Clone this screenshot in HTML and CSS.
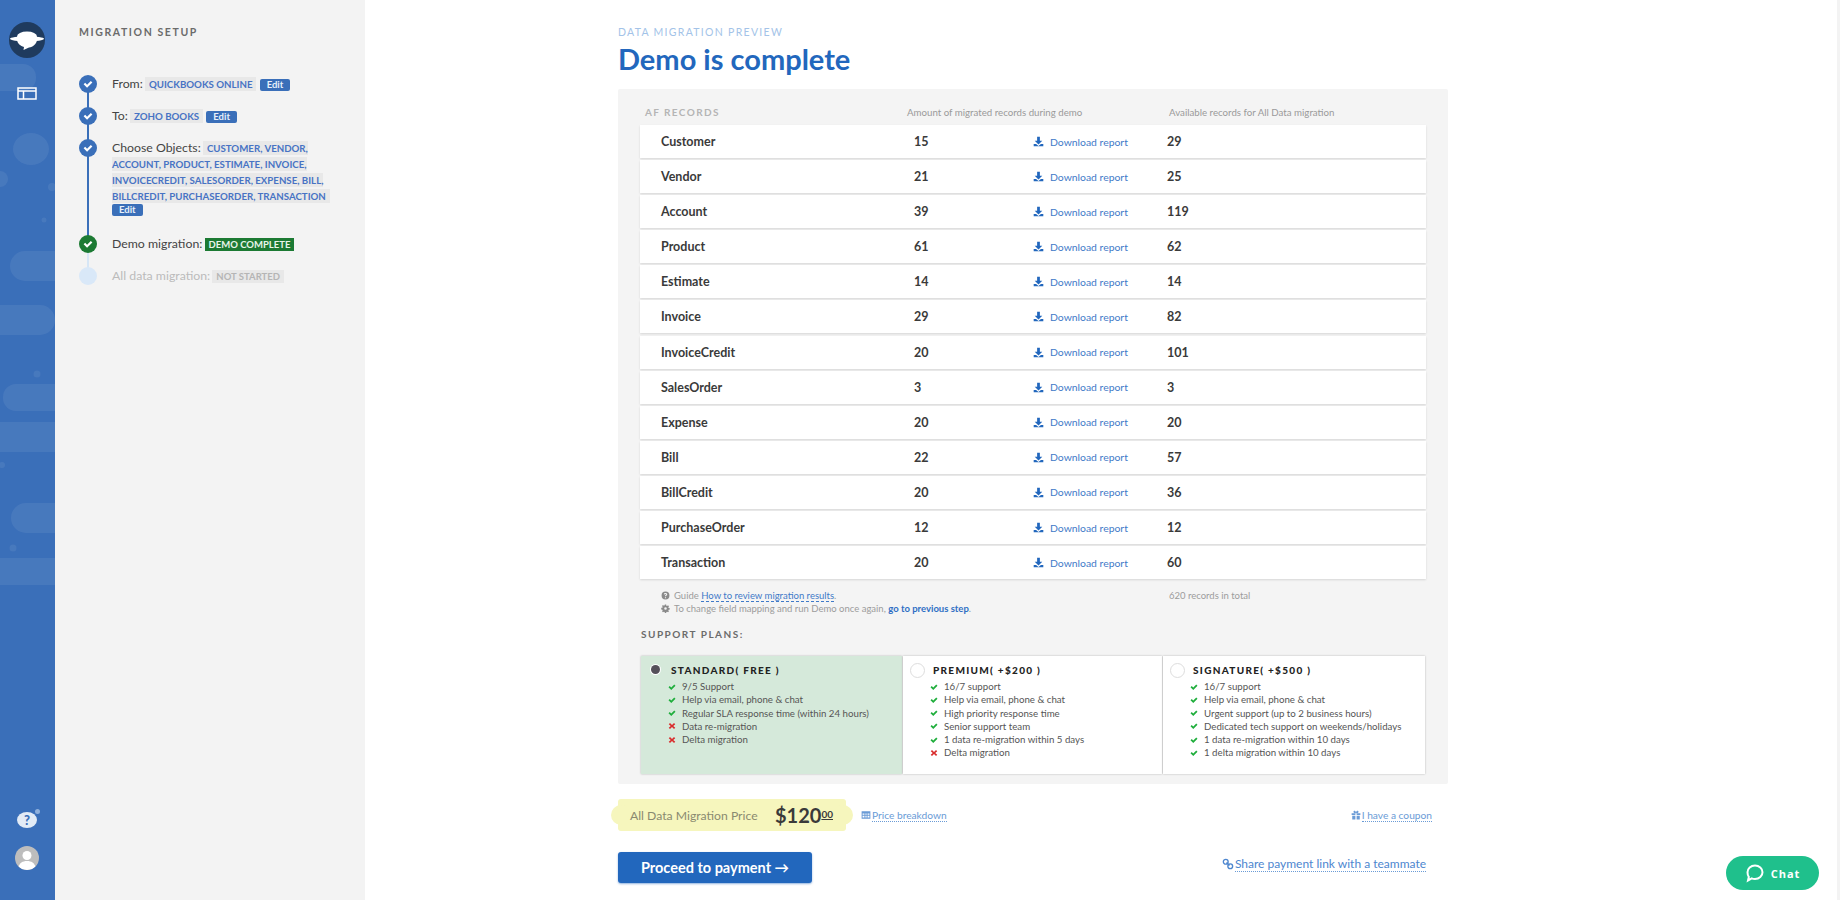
FILE: index.html
```html
<!DOCTYPE html>
<html lang="en">
<head>
    <meta charset="UTF-8">
    <title>Data migration preview</title>
    <link rel="stylesheet" href="styles.css">
</head>
<body>

    <svg class="icon-defs" width="0" height="0">
        <symbol id="i-download" viewBox="0 0 16 16"><path d="M6 1h4v6h3.500L8 12.200 2.500 7H6z"/><path d="M1 11.500h3.500L8 14.500l3.500-3H15V15H1z"/></symbol>
        <symbol id="i-check" viewBox="0 0 16 16"><path d="M1 8.500l2.500-2.500 3 3L12.500 3 15 5.500 6.500 14z"/></symbol>
        <symbol id="i-cross" viewBox="0 0 16 16"><path d="M4 2l4 3.800L12 2l2.500 2.500-4 3.500 4 3.500L12 14 8 10.200 4 14l-2.500-2.500 4-3.500-4-3.500z"/></symbol>
        <symbol id="i-question" viewBox="0 0 16 16"><path fill-rule="evenodd" d="M8 1a7 7 0 1 1 0 14A7 7 0 0 1 8 1zM7 11v2h2v-2zM8 3.500c-1.600 0-2.800.8-3 2.300l1.800.3c.1-.6.500-.9 1.100-.9s1 .3 1 .8c0 .4-.3.7-.8 1.100C7.400 7.600 7 8.200 7 9.500h2c0-.7.200-.9.800-1.400.7-.5 1.200-1.100 1.200-2.100 0-1.500-1.300-2.500-3-2.500z"/></symbol>
        <symbol id="i-cog" viewBox="0 0 16 16"><path fill-rule="evenodd" d="M6.800 1h2.400l.3 2 1.300.6 1.700-1.200 1.700 1.700-1.200 1.700.6 1.300 2 .3v2.400l-2 .3-.6 1.300 1.200 1.700-1.700 1.700-1.700-1.200-1.300.6-.3 2H6.800l-.3-2-1.300-.6-1.700 1.200-1.700-1.700 1.200-1.700-.6-1.300-2-.3V6.800l2-.3.6-1.300L1.800 3.500l1.700-1.700 1.700 1.200 1.300-.6zM8 5.700a2.300 2.300 0 1 0 0 4.600 2.300 2.300 0 0 0 0-4.600z"/></symbol>
        <symbol id="i-table" viewBox="0 0 16 16"><path fill-rule="evenodd" d="M1 2h14v12H1zM2.500 5.500V7.500h3V5.500zm4.500 0V7.500h2V5.500zm3.500 0V7.500h3V5.500zM2.500 9v3h3V9zM7 9v3h2V9zm3.500 0v3h3V9z"/></symbol>
        <symbol id="i-gift" viewBox="0 0 16 16"><path d="M1 5h6v3H1zm8 0h6v3H9zM2 9h5v6H2zm7 0h5v6H9z"/><path d="M8 5C6 5 4 4.500 4 3s1.500-2 2.500-1.500C7.500 2 8 3.500 8 5c0-1.500.5-3 1.500-3.500S12 1.500 12 3 10 5 8 5z"/></symbol>
        <symbol id="i-link" viewBox="0 0 16 16"><g fill="none" stroke="currentColor" stroke-width="1.800"><circle cx="5" cy="5" r="3.200"/><circle cx="11" cy="11" r="3.200"/><path d="M6 6l4 4"/></g></symbol>
    </svg>

    <!-- Rail -->
    <aside class="rail">
        <svg class="rail-blobs" width="55" height="900" viewBox="0 0 55 900">
            <rect x="-20" y="64" width="56" height="27" rx="13"/>
            <ellipse cx="31" cy="149" rx="18" ry="16"/>
            <circle cx="0" cy="179" r="8"/>
            <circle cx="52" cy="187" r="4"/>
            <circle cx="44" cy="220" r="2.500"/>
            <rect x="10" y="251" width="70" height="30" rx="15"/>
            <rect x="-30" y="305" width="85" height="30" rx="15"/>
            <circle cx="37" cy="374" r="3.500"/>
            <rect x="3" y="384" width="80" height="27" rx="13"/>
            <rect x="-20" y="422" width="90" height="30" rx="0"/>
            <circle cx="2" cy="465" r="3"/>
            <rect x="11" y="503" width="70" height="30" rx="15"/>
            <circle cx="13" cy="548" r="3.500"/>
            <rect x="-20" y="558" width="90" height="27"/>
        </svg>

        <div class="logo">
            <svg width="36" height="36" viewBox="0 0 36 36">
                <circle cx="18" cy="18" r="18" fill="#1f3b5e"/>
                <ellipse cx="18" cy="14.500" rx="10" ry="5" fill="#fff"/>
                <path d="M8 18h20c-.5 4-4 7-8 7.500L14.500 28l.5-3c-3.500-1-6.500-3.500-7-7z" fill="#fff"/>
                <ellipse cx="18" cy="16.800" rx="17" ry="2.600" fill="#fff"/>
            </svg>
        </div>
        <svg class="rail-nav" width="20" height="13" viewBox="0 0 20 13">
            <path d="M1 1h18v11H1zM1 4h18M6.500 4v8" fill="none" stroke="#fff" stroke-width="1.500"/>
        </svg>

        <div class="rail-bottom">
            <div class="help">?<span class="help-dot"></span></div>
            <div class="avatar">
                <svg width="24" height="24" viewBox="0 0 24 24">
                    <circle cx="12" cy="9.500" r="4.500" fill="#fff"/>
                    <path d="M3.500 21c1-4 4-6 8.500-6s7.500 2 8.500 6c-2 2-5 3-8.500 3s-6.500-1-8.500-3z" fill="#fff"/>
                </svg>
            </div>
        </div>
    </aside>

    <!-- Sidebar -->
    <aside class="sidebar">
        <h4 class="sidebar-title">MIGRATION SETUP</h4>
        <ul class="steps">
            <li class="step done">
                <span class="dot"><svg><use href="#i-check"/></svg></span>
                From: <span class="tag">QUICKBOOKS ONLINE</span> <a class="edit">Edit</a>
            </li>
            <li class="step done">
                <span class="dot"><svg><use href="#i-check"/></svg></span>
                To: <span class="tag">ZOHO BOOKS</span> <a class="edit">Edit</a>
            </li>
            <li class="step done tall">
                <span class="dot"><svg><use href="#i-check"/></svg></span>
                Choose Objects: <span class="tag">CUSTOMER, VENDOR, ACCOUNT, PRODUCT, ESTIMATE, INVOICE, INVOICECREDIT, SALESORDER, EXPENSE, BILL, BILLCREDIT, PURCHASEORDER, TRANSACTION</span> <a class="edit">Edit</a>
            </li>
            <li class="step green">
                <span class="dot"><svg><use href="#i-check"/></svg></span>
                Demo migration: <span class="tag tag-green">DEMO COMPLETE</span>
            </li>
            <li class="step off">
                <span class="dot"></span>
                All data migration: <span class="tag tag-grey">NOT STARTED</span>
            </li>
        </ul>
    </aside>

    <!-- Main -->
    <main class="main">
        <div class="content">
            <p class="eyebrow">DATA MIGRATION PREVIEW</p>
            <h1>Demo is complete</h1>

            <section class="panel">
                <div class="records-head">
                    <span class="head-title">AF RECORDS</span>
                    <span>Amount of migrated records during demo</span>
                    <span></span>
                    <span>Available records for All Data migration</span>
                </div>

                <div class="records">
                    <div class="record"><b>Customer</b><b>15</b><a class="report"><svg><use href="#i-download"/></svg>Download report</a><b>29</b></div>
                    <div class="record"><b>Vendor</b><b>21</b><a class="report"><svg><use href="#i-download"/></svg>Download report</a><b>25</b></div>
                    <div class="record"><b>Account</b><b>39</b><a class="report"><svg><use href="#i-download"/></svg>Download report</a><b>119</b></div>
                    <div class="record"><b>Product</b><b>61</b><a class="report"><svg><use href="#i-download"/></svg>Download report</a><b>62</b></div>
                    <div class="record"><b>Estimate</b><b>14</b><a class="report"><svg><use href="#i-download"/></svg>Download report</a><b>14</b></div>
                    <div class="record"><b>Invoice</b><b>29</b><a class="report"><svg><use href="#i-download"/></svg>Download report</a><b>82</b></div>
                    <div class="record"><b>InvoiceCredit</b><b>20</b><a class="report"><svg><use href="#i-download"/></svg>Download report</a><b>101</b></div>
                    <div class="record"><b>SalesOrder</b><b>3</b><a class="report"><svg><use href="#i-download"/></svg>Download report</a><b>3</b></div>
                    <div class="record"><b>Expense</b><b>20</b><a class="report"><svg><use href="#i-download"/></svg>Download report</a><b>20</b></div>
                    <div class="record"><b>Bill</b><b>22</b><a class="report"><svg><use href="#i-download"/></svg>Download report</a><b>57</b></div>
                    <div class="record"><b>BillCredit</b><b>20</b><a class="report"><svg><use href="#i-download"/></svg>Download report</a><b>36</b></div>
                    <div class="record"><b>PurchaseOrder</b><b>12</b><a class="report"><svg><use href="#i-download"/></svg>Download report</a><b>12</b></div>
                    <div class="record"><b>Transaction</b><b>20</b><a class="report"><svg><use href="#i-download"/></svg>Download report</a><b>60</b></div>
                </div>

                <div class="notes">
                    <div>
                        <p><svg><use href="#i-question"/></svg>Guide <a class="dashed">How to review migration results</a>.</p>
                        <p><svg><use href="#i-cog"/></svg>To change field mapping and run Demo once again, <a class="strong-link">go to previous step</a>.</p>
                    </div>
                    <p class="total">620 records in total</p>
                </div>

                <h4 class="plans-title">SUPPORT PLANS:</h4>
                <div class="plans">
                    <div class="plan selected">
                        <h5><span class="radio"></span>STANDARD( FREE )</h5>
                        <ul>
                            <li><svg class="yes"><use href="#i-check"/></svg>9/5 Support</li>
                            <li><svg class="yes"><use href="#i-check"/></svg>Help via email, phone &amp; chat</li>
                            <li><svg class="yes"><use href="#i-check"/></svg>Regular SLA response time (within 24 hours)</li>
                            <li><svg class="no"><use href="#i-cross"/></svg>Data re-migration</li>
                            <li><svg class="no"><use href="#i-cross"/></svg>Delta migration</li>
                        </ul>
                    </div>
                    <div class="plan">
                        <h5><span class="radio"></span>PREMIUM( +$200 )</h5>
                        <ul>
                            <li><svg class="yes"><use href="#i-check"/></svg>16/7 support</li>
                            <li><svg class="yes"><use href="#i-check"/></svg>Help via email, phone &amp; chat</li>
                            <li><svg class="yes"><use href="#i-check"/></svg>High priority response time</li>
                            <li><svg class="yes"><use href="#i-check"/></svg>Senior support team</li>
                            <li><svg class="yes"><use href="#i-check"/></svg>1 data re-migration within 5 days</li>
                            <li><svg class="no"><use href="#i-cross"/></svg>Delta migration</li>
                        </ul>
                    </div>
                    <div class="plan">
                        <h5><span class="radio"></span>SIGNATURE( +$500 )</h5>
                        <ul>
                            <li><svg class="yes"><use href="#i-check"/></svg>16/7 support</li>
                            <li><svg class="yes"><use href="#i-check"/></svg>Help via email, phone &amp; chat</li>
                            <li><svg class="yes"><use href="#i-check"/></svg>Urgent support (up to 2 business hours)</li>
                            <li><svg class="yes"><use href="#i-check"/></svg>Dedicated tech support on weekends/holidays</li>
                            <li><svg class="yes"><use href="#i-check"/></svg>1 data re-migration within 10 days</li>
                            <li><svg class="yes"><use href="#i-check"/></svg>1 delta migration within 10 days</li>
                        </ul>
                    </div>
                </div>
            </section>

            <div class="price-row">
                <div class="price">
                    <span class="price-label">All Data Migration Price</span>
                    <span class="price-value">$120<sup>00</sup></span>
                </div>
                <a class="soft-link breakdown"><svg><use href="#i-table"/></svg><span>Price breakdown</span></a>
                <a class="soft-link coupon"><svg><use href="#i-gift"/></svg><span>I have a coupon</span></a>
            </div>

            <div class="actions">
                <button class="pay-btn">Proceed to payment →</button>
                <a class="soft-link share"><svg><use href="#i-link"/></svg><span>Share payment link with a teammate</span></a>
            </div>
        </div>
    </main>

    <!-- Chat -->
    <button class="chat-btn">
        <svg width="20" height="20" viewBox="0 0 20 20"><path d="M10 2.500c4.200 0 7.500 3 7.500 6.800s-3.300 6.700-7.500 6.700c-1.200 0-2.300-.2-3.300-.7L3 17.500l.8-3.600C2.900 12.700 2.500 11 2.500 9.300 2.500 5.500 5.800 2.500 10 2.500z" fill="none" stroke="#fff" stroke-width="2"/></svg>
        Chat
    </button>

</body>
</html>
```

FILE: styles.css
```css
html, body {
    margin: 0;
    padding: 0;
    height: 100%;
    overflow: hidden;
}

body {
    display: flex;
    font-family: Lato, "Open Sans", sans-serif;
    color: #333;
    background: #fff;
}

.icon-defs {
    position: absolute;
}

p, h1, h4, h5, ul {
    margin: 0;
    padding: 0;
}

ul {
    list-style: none;
}

/* Rail */
.rail {
    position: relative;
    flex: 0 0 55px;
    box-sizing: border-box;
    height: 900px;
    padding-right: 1px;
    background-color: #3a6fb9;
    display: flex;
    flex-direction: column;
    align-items: center;
    overflow: hidden;
}

.rail-blobs {
    position: absolute;
    top: 0;
    left: 0;
    fill: rgba(255, 255, 255, 0.07);
}

.logo {
    position: relative;
    margin-top: 22px;
    height: 36px;
}

.rail-nav {
    position: relative;
    margin-top: 29px;
}

.rail-bottom {
    position: relative;
    margin-top: auto;
    padding-bottom: 30px;
    display: flex;
    flex-direction: column;
    align-items: center;
    gap: 18px;
}

.help {
    position: relative;
    width: 20px;
    height: 16px;
    border-radius: 50%;
    background-color: #e2ebf6;
    color: #3a6fb9;
    font-size: 13px;
    font-weight: 900;
    line-height: 16px;
    text-align: center;
}

.help-dot {
    position: absolute;
    top: -3px;
    right: -3px;
    width: 5px;
    height: 5px;
    border-radius: 50%;
    background-color: #8fb0dc;
}

.avatar {
    width: 24px;
    height: 24px;
    border-radius: 50%;
    background-color: #bdbdbd;
    overflow: hidden;
}

/* Sidebar */
.sidebar {
    flex: 0 0 310px;
    box-sizing: border-box;
    height: 900px;
    padding: 26px 0 0 24px;
    background-color: #f3f3f3;
}

.sidebar-title {
    font-size: 10.500px;
    font-weight: 700;
    letter-spacing: 1.600px;
    line-height: 13px;
    color: #6b6b6b;
}

.steps {
    margin-top: 37px;
}

.step {
    position: relative;
    box-sizing: border-box;
    width: 262px;
    height: 32px;
    padding-left: 33px;
    font-size: 12.300px;
    line-height: 16px;
    color: #444;
}

.step.tall {
    height: 96px;
}

.step::before {
    content: "";
    position: absolute;
    left: 8px;
    top: 8px;
    bottom: -8px;
    width: 2px;
    background-color: #3a6fb9;
}

.step.green::before {
    background-color: #d6e6f6;
}

.step.off::before {
    display: none;
}

.dot {
    position: absolute;
    left: 0;
    top: -1px;
    width: 18px;
    height: 18px;
    border-radius: 50%;
    background-color: #3a6fb9;
    display: flex;
    align-items: center;
    justify-content: center;
}

.dot svg {
    width: 10px;
    height: 10px;
    fill: #fff;
}

.step.green .dot {
    background-color: #1c7a33;
}

.step.off {
    color: #bbb;
}

.step.off .dot {
    background-color: #d9e8f8;
}

.tag {
    padding: 1px 4px;
    margin-left: -1px;
    font-size: 9.700px;
    font-weight: 700;
    line-height: 12px;
    color: #4773c4;
    background-color: #e8e8e8;
}

.tag-green {
    font-size: 9.500px;
    color: #e8f5ea;
    background-color: #1c7a33;
}

.tag-grey {
    font-size: 9.500px;
    color: #b5b5b5;
    background-color: #e8e8e8;
}

.edit {
    display: inline-block;
    padding: 0 7px;
    border-radius: 2px;
    font-size: 9.500px;
    font-weight: 700;
    line-height: 12px;
    color: #e8f0fa;
    background-color: #3a6fb9;
}

.step.tall .edit {
    display: table;
}

/* Main */
.main {
    flex: 1;
    border-right: 3px solid #f3f3f3;
    height: 900px;
}

.content {
    width: 830px;
    margin-left: 253px;
}

.eyebrow {
    padding-top: 26px;
    font-size: 10.500px;
    letter-spacing: 1.300px;
    line-height: 13px;
    color: #a3c3e8;
}

h1 {
    margin-top: 3px;
    font-size: 29px;
    font-weight: 700;
    line-height: 33px;
    color: #2267bd;
}

.panel {
    box-sizing: border-box;
    height: 695px;
    margin-top: 14px;
    padding: 0 22px;
    background-color: #f4f4f4;
    border-radius: 2px;
}

.records-head {
    box-sizing: border-box;
    display: grid;
    grid-template-columns: 262px 128px 134px 1fr;
    align-items: center;
    height: 36px;
    padding: 9px 0 0 5px;
    font-size: 9.700px;
    white-space: nowrap;
    color: #9a9a9a;
}

.head-title {
    font-size: 10px;
    font-weight: 700;
    letter-spacing: 1.400px;
    color: #b5b5b5;
}

.records {
    display: flex;
    flex-direction: column;
    gap: 2.100px;
}

.record {
    display: grid;
    grid-template-columns: 253px 119px 134px 1fr;
    align-items: center;
    height: 33px;
    padding-left: 21px;
    background-color: #fff;
    box-shadow: 0 1px 2px rgba(0, 0, 0, 0.12);
    font-size: 12.500px;
    color: #3a3a3a;
}

.report {
    display: flex;
    align-items: center;
    font-size: 10.400px;
    color: #3f7ac8;
}

.report svg {
    width: 11px;
    height: 11px;
    margin-right: 6px;
    fill: #2267bd;
}

.notes {
    display: grid;
    grid-template-columns: 508px 1fr;
    padding: 10px 0 0 21px;
    font-size: 9.500px;
    line-height: 13px;
    color: #9c9c9c;
}

.notes svg {
    width: 9px;
    height: 9px;
    margin-right: 4px;
    fill: #8a8a8a;
    vertical-align: -1px;
}

.dashed {
    color: #3f7ac8;
    border-bottom: 1px dashed #3f7ac8;
}

.strong-link {
    color: #2e6fc4;
    font-weight: 700;
}

.plans-title {
    margin-top: 13px;
    padding-left: 1px;
    font-size: 10px;
    font-weight: 700;
    letter-spacing: 1.500px;
    line-height: 13px;
    color: #6b6b6b;
}

.plans {
    display: grid;
    grid-template-columns: 261px 259px 262px;
    gap: 1px;
    width: 784px;
    margin: 15px 0 0 1px;
}

.plan {
    box-sizing: border-box;
    height: 118px;
    padding: 8px 0 0 30px;
    background-color: #fff;
    box-shadow: 0 0 2px rgba(0, 0, 0, 0.25);
}

.plan.selected {
    background-color: #d5e9da;
}

.plan h5 {
    position: relative;
    font-size: 10px;
    font-weight: 900;
    letter-spacing: 1.300px;
    line-height: 13px;
    color: #222;
}

.radio {
    position: absolute;
    left: -23px;
    top: -1px;
    width: 13px;
    height: 13px;
    border-radius: 50%;
    border: 1px solid #ddd;
    background-color: #fff;
}

.plan.selected .radio {
    left: -20px;
    top: 1px;
    width: 9px;
    height: 9px;
    border: 0;
    background-color: #55505a;
    box-shadow: 0 0 0 1px #fff;
}

.plan ul {
    margin: 3px 0 0 -3px;
}

.plan li {
    display: flex;
    align-items: center;
    font-size: 9.700px;
    line-height: 13.200px;
    color: #555;
}

.plan li svg {
    flex: none;
    width: 8px;
    height: 8px;
    margin-right: 6px;
}

.yes {
    fill: #1fae3c;
}

.no {
    fill: #d92c2c;
}

/* Price */
.price-row {
    position: relative;
    display: flex;
    align-items: center;
    height: 32px;
    margin-top: 15px;
}

.price {
    position: relative;
    box-sizing: border-box;
    display: flex;
    align-items: center;
    justify-content: space-between;
    width: 228px;
    height: 32px;
    padding: 0 13px 0 12px;
    background-color: #f6f6bd;
    border-radius: 3px;
}

.price::before,
.price::after {
    content: "";
    position: absolute;
    top: 6px;
    width: 20px;
    height: 20px;
    border-radius: 50%;
    background-color: #f6f6bd;
}

.price::before {
    left: -7px;
}

.price::after {
    right: -7px;
}

.price-label {
    position: relative;
    z-index: 1;
    font-size: 12.200px;
    color: #8a8a70;
}

.price-value {
    position: relative;
    z-index: 1;
    font-size: 20px;
    font-weight: 700;
    color: #3a3a3a;
}

.price-value sup {
    font-size: 10px;
    text-decoration: underline;
    vertical-align: 5px;
    line-height: 0;
}

.soft-link {
    display: inline-flex;
    align-items: center;
    font-size: 10.200px;
    color: #6a9bd6;
}

.soft-link svg {
    width: 10px;
    height: 10px;
    margin-right: 1px;
    fill: #6a9bd6;
}

.soft-link span {
    border-bottom: 1px dotted #6a9bd6;
}

.breakdown {
    margin-left: 15px;
}

.coupon {
    margin-left: auto;
    margin-right: 16px;
}

.actions {
    display: flex;
    align-items: center;
    justify-content: space-between;
    margin-top: 21px;
    padding-right: 22px;
}

.pay-btn {
    width: 194px;
    height: 31px;
    border: none;
    border-radius: 3px;
    background-color: #2267bd;
    box-shadow: 0 1px 2px rgba(34, 103, 189, 0.5);
    color: #fff;
    font-family: inherit;
    font-size: 14.500px;
    font-weight: 700;
}

.share {
    margin-bottom: 8px;
    font-size: 12px;
    color: #4d86cf;
}

.share svg {
    width: 12px;
    height: 12px;
    color: #4d86cf;
}

.chat-btn {
    position: fixed;
    left: 1726px;
    top: 856px;
    display: flex;
    align-items: center;
    justify-content: center;
    gap: 6px;
    width: 93px;
    height: 34px;
    border: none;
    border-radius: 17px;
    background-color: #1fc08c;
    color: #fff;
    font-family: "Open Sans", sans-serif;
    font-size: 11px;
    font-weight: 700;
    letter-spacing: 1px;
}
```
